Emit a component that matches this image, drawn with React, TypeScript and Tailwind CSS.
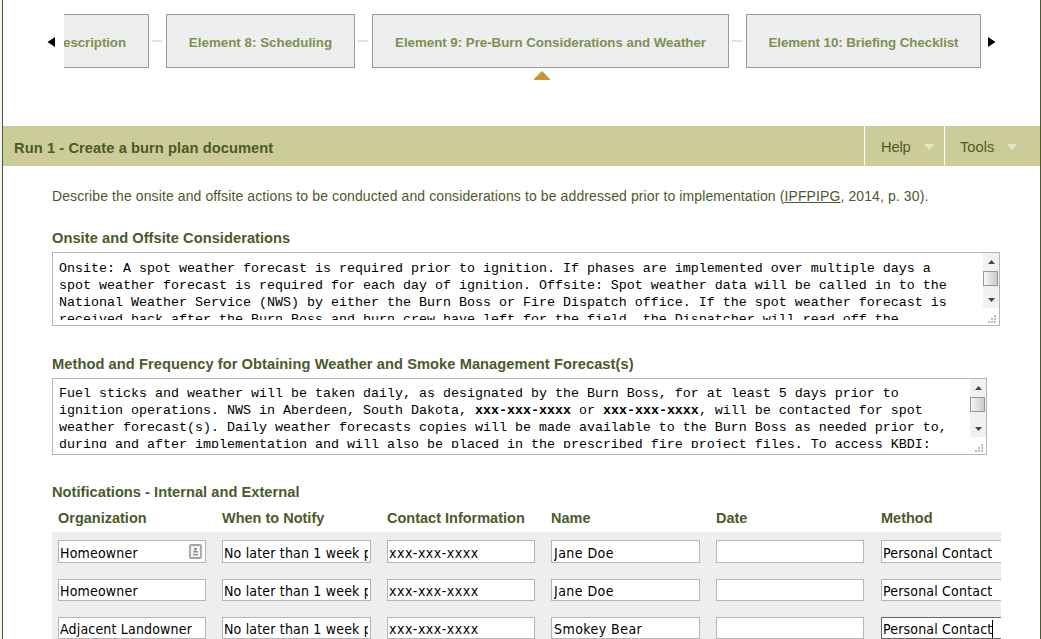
import type { ReactNode } from "react";

const elementBox =
  "flex h-[54px] shrink-0 items-center justify-center border border-[#999] bg-[#eee] pt-[3px] text-[13.33px] font-bold leading-none whitespace-nowrap text-[#7d9152]";

function Connector() {
  return (
    <svg className="mx-[3px] shrink-0" width="11" height="2" viewBox="0 0 11 2">
      <path d="M0 1H11" stroke="#a8a8a8" strokeWidth="1" strokeDasharray="1.5 .7" />
    </svg>
  );
}

function ElementNav() {
  return (
    <nav className="flex h-[54px] items-center pl-[44px]">
      <svg className="mt-[2px]" width="8" height="10" viewBox="0 0 8 10">
        <path d="M8 0V10L0.5 5Z" fill="#000" />
      </svg>
      <div className="ml-[9px] flex w-[917px] items-center">
        <div className={`${elementBox} w-[85px] justify-end overflow-hidden border-l-0 pr-[22px]`}>
          <span className="tracking-[-0.08px]">escription</span>
        </div>
        <Connector />
        <div className={`${elementBox} w-[189px]`}>
          <span className="tracking-[0.02px]">Element 8: Scheduling</span>
        </div>
        <Connector />
        <div className={`${elementBox} relative w-[357px]`}>
          <span className="tracking-[-0.03px]">Element 9: Pre-Burn Considerations and Weather</span>
          <svg className="absolute top-[56px] left-[161px]" width="16" height="9" viewBox="0 0 16 9">
            <path d="M8 0L16 8V9H0V8Z" fill="#c9952f" />
          </svg>
        </div>
        <Connector />
        <div className={`${elementBox} w-[235px]`}>
          <span className="tracking-[-0.06px]">Element 10: Briefing Checklist</span>
        </div>
      </div>
      <svg className="mt-[2px] ml-[7px]" width="8" height="10" viewBox="0 0 8 10">
        <path d="M0 0V10L7.5 5Z" fill="#000" />
      </svg>
    </nav>
  );
}

function BarMenu({ label, className }: { label: string; className: string }) {
  return (
    <div className={`flex h-[39px] items-center border-l border-white pt-[3px] text-[14.67px] ${className}`}>
      <span>{label}</span>
      <svg className="ml-[13px]" width="10" height="6" viewBox="0 0 10 6">
        <path d="M0 0H10L5 6Z" fill="#e6e6c8" />
      </svg>
    </div>
  );
}

function ScrollBar({ className }: { className: string }) {
  return (
    <div className={`flex w-4 flex-col items-center bg-[#f1f1f1] ${className}`}>
      <svg className="mt-[7px]" width="7" height="4" viewBox="0 0 7 4">
        <path d="M0 4L3.5 0L7 4Z" fill="#444" />
      </svg>
      <div className="mt-[7px] h-[15px] w-[15px] self-start border border-[#979797] bg-linear-to-r from-[#f7f7f7] to-[#c9c9cf]" />
      <svg className="mt-auto mb-[6px]" width="7" height="4" viewBox="0 0 7 4">
        <path d="M0 0H7L3.5 4Z" fill="#444" />
      </svg>
    </div>
  );
}

function ResizeGrip() {
  return (
    <svg className="mt-auto mr-[3px] mb-[2px] self-end" width="8" height="8" viewBox="0 0 8 8" fill="#bdbdbd">
      <path d="M6 0h2v2H6zM3 3h2v2H3zM6 3h2v2H6zM0 6h2v2H0zM3 6h2v2H3zM6 6h2v2H6z" />
    </svg>
  );
}

function TextBox({
  lines,
  box,
  text,
  bar,
}: {
  lines: ReactNode[];
  box: string;
  text: string;
  bar: string;
}) {
  return (
    <div className={`flex justify-between border border-[#b5b5b5] bg-white ${box}`}>
      <div
        className={`ml-[6px] overflow-hidden font-['Liberation_Mono',monospace] text-[13.333px] leading-[17px] whitespace-pre text-black ${text}`}
      >
        {lines.map((line, i) => (
          <div key={i}>{line}</div>
        ))}
      </div>
      <div className="flex flex-col">
        <ScrollBar className={bar} />
        <ResizeGrip />
      </div>
    </div>
  );
}

const considerations = [
  "Onsite: A spot weather forecast is required prior to ignition. If phases are implemented over multiple days a",
  "spot weather forecast is required for each day of ignition. Offsite: Spot weather data will be called in to the",
  "National Weather Service (NWS) by either the Burn Boss or Fire Dispatch office. If the spot weather forecast is",
  "received back after the Burn Boss and burn crew have left for the field, the Dispatcher will read off the",
];

const forecasts = [
  "Fuel sticks and weather will be taken daily, as designated by the Burn Boss, for at least 5 days prior to",
  <>
    ignition operations. NWS in Aberdeen, South Dakota, <b>xxx-xxx-xxxx</b> or <b>xxx-xxx-xxxx</b>, will be contacted
    for spot
  </>,
  "weather forecast(s). Daily weather forecasts copies will be made available to the Burn Boss as needed prior to,",
  "during and after implementation and will also be placed in the prescribed fire project files. To access KBDI:",
];

const headings = ["Organization", "When to Notify", "Contact Information", "Name", "Date", "Method"];

const rows = [
  ["Homeowner", "No later than 1 week prior", "xxx-xxx-xxxx", "Jane Doe", "", "Personal Contact"],
  ["Homeowner", "No later than 1 week prior", "xxx-xxx-xxxx", "Jane Doe", "", "Personal Contact"],
  ["Adjacent Landowner", "No later than 1 week prior", "xxx-xxx-xxxx", "Smokey Bear", "", "Personal Contact"],
];

const columns = "grid grid-cols-[164px_165px_164px_165px_165px_164px]";
const fieldStyles = [
  "w-[148px] pl-px tracking-[0.18px]",
  "w-[149px] pl-px tracking-[0.18px]",
  "w-[148px] pl-px tracking-[0.5px]",
  "w-[149px] pl-[2px] tracking-[0.45px]",
  "w-[148px] pl-px",
  "w-[148px] pl-px tracking-[0.18px]",
];

function ContactIcon() {
  return (
    <svg className="mr-px mb-[3px] ml-auto shrink-0" width="13" height="15" viewBox="0 0 13 15">
      <rect x="1" y="1" width="11" height="13" rx="1" fill="#f4f4f4" stroke="#a3a3a3" strokeWidth="1.8" />
      <circle cx="6.5" cy="5" r="1.3" fill="#888" />
      <path d="M4 8.5Q4 6.5 6.5 6.5T9 8.5ZM4 10H9V11.3H4Z" fill="#888" />
    </svg>
  );
}

function NotificationRow({ values, first, focused }: { values: string[]; first: boolean; focused: boolean }) {
  return (
    <div className={`${columns} mb-4`}>
      {values.map((value, i) => (
        <div
          key={i}
          className={`flex items-center border bg-white pt-[2px] pr-[2px] font-['DejaVu_Sans_Condensed','DejaVu_Sans',sans-serif] text-[14px] leading-none font-stretch-condensed text-black ${fieldStyles[i]} ${first ? "h-[23px]" : "h-[22px]"} ${focused && i === 5 ? "border-[#666]" : "border-[#b5b5b5]"}`}
        >
          <span className="overflow-hidden leading-[18px] whitespace-nowrap">{value}</span>
          {focused && i === 5 && <span className="h-[18px] w-px shrink-0 bg-black" />}
          {first && i === 0 && <ContactIcon />}
        </div>
      ))}
    </div>
  );
}

export default function App() {
  return (
    <div className="h-[639px] w-[1041px] overflow-hidden bg-[#f4f4f4] pl-[2px] font-['Liberation_Sans',Arial,sans-serif] text-[#4b5a2a]">
      <div className="h-full border-x border-[#4b5a2a] bg-white pt-[14px]">
        <ElementNav />

        <header className="mt-[58px] flex h-10 bg-[#cccc99] pl-[11px]">
          <h1 className="flex-1 pt-[13px] text-[14.67px] leading-[18px] font-bold tracking-[0.08px]">
            Run 1 - Create a burn plan document
          </h1>
          <BarMenu label="Help" className="w-[80px] pl-[16px] tracking-[-0.15px]" />
          <BarMenu label="Tools" className="w-[96px] pl-[15px]" />
        </header>

        <main className="pl-[49px]">
          <p className="mt-[21px] text-[14px] leading-[18px] tracking-[0.104px] whitespace-nowrap">
            Describe the onsite and offsite actions to be conducted and considerations to be addressed prior to
            implementation (<span className="underline">IPFPIPG</span>, 2014, p. 30).
          </p>

          <h2 className="mt-[24px] text-[14.67px] leading-[18px] font-bold tracking-[0.04px]">
            Onsite and Offsite Considerations
          </h2>
          <TextBox lines={considerations} box="mt-[5px] h-[74px] w-[948px]" text="mt-[7px] h-[60px]" bar="h-[55px]" />

          <h2 className="mt-[29px] text-[14.67px] leading-[18px] font-bold tracking-[0.06px]">
            Method and Frequency for Obtaining Weather and Smoke Management Forecast(s)
          </h2>
          <TextBox lines={forecasts} box="mt-[5px] h-[77px] w-[935px]" text="mt-[6px] h-[63px]" bar="h-[58px]" />

          <h2 className="mt-[28px] text-[14.67px] leading-[18px] font-bold tracking-[0.02px]">
            Notifications - Internal and External
          </h2>
          <div className={`${columns} mt-[8px] pl-[6px] text-[14.5px] leading-[18px] font-bold`}>
            {headings.map((h) => (
              <span key={h} className="whitespace-nowrap">
                {h}
              </span>
            ))}
          </div>
          <div className="mt-[5px] h-[107px] w-[949px] overflow-hidden bg-[#eee] pt-[8px] pl-[6px]">
            {rows.map((values, i) => (
              <NotificationRow key={i} values={values} first={i === 0} focused={i === 2} />
            ))}
          </div>
        </main>
      </div>
    </div>
  );
}
